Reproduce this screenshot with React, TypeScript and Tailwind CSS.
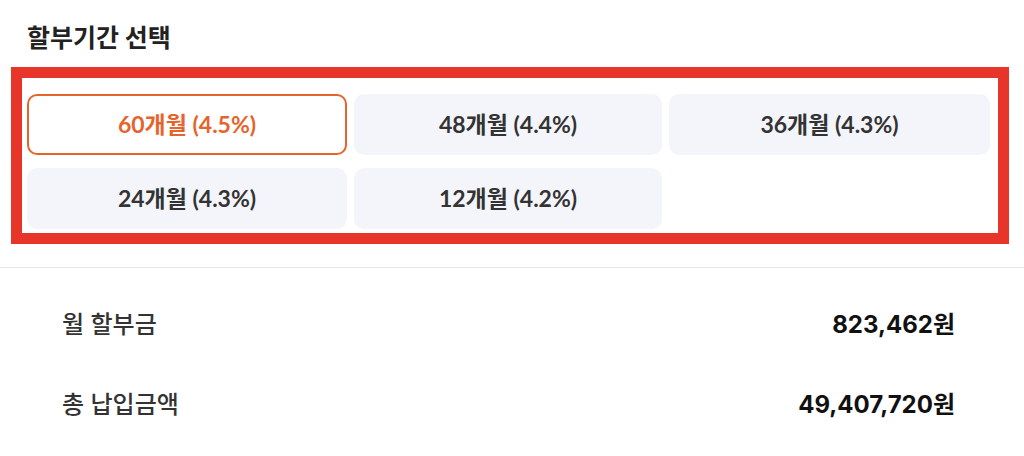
const periods = [
  { months: 60, rate: '4.5%' },
  { months: 48, rate: '4.4%' },
  { months: 36, rate: '4.3%' },
  { months: 24, rate: '4.3%' },
  { months: 12, rate: '4.2%' },
]

const summary = [
  { label: '월 할부금', value: '823,462원' },
  { label: '총 납입금액', value: '49,407,720원' },
]

export default function App() {
  const selected = 60

  return (
    <div className="relative w-[1024px] h-[456px] bg-white overflow-hidden">
      <div className="px-[27px] pt-[20px]">
        <h2
          className="text-[25px] leading-[32px] font-bold text-[#222]"
          style={{ fontFamily: '"Noto Sans CJK KR", sans-serif' }}
        >
          할부기간 선택
        </h2>

        <div
          className="mt-[42px] w-[963px] grid grid-cols-[320px_308px_321px] gap-x-[7px] gap-y-[13px]"
          style={{ fontFamily: 'Lato, "Noto Sans CJK KR", sans-serif' }}
        >
          {periods.map((p) => {
            const active = p.months === selected
            return (
              <button
                key={p.months}
                className={
                  active
                    ? 'h-[61px] rounded-[10px] border-2 border-[#e6642b] bg-white text-[23px] font-bold text-[#e6642b]'
                    : 'h-[61px] rounded-[10px] bg-[#f4f5fa] text-[23px] font-bold text-[#333]'
                }
              >
                {p.months}개월 ({p.rate})
              </button>
            )
          })}
        </div>
      </div>

      <div className="mt-[38px] border-t border-[#e6e7eb]" />

      <div
        className="pt-[17px] pl-[62px] pr-[69px]"
        style={{ fontFamily: 'Inter, "Noto Sans CJK KR", sans-serif' }}
      >
        {summary.map((row) => (
          <div key={row.label} className="h-[80px] flex items-center justify-between">
            <span className="text-[24px] font-medium text-[#333]">{row.label}</span>
            <span className="text-[24px] font-bold text-[#111]">{row.value}</span>
          </div>
        ))}
      </div>

      {/* annotation box drawn over the period grid */}
      <div className="absolute left-[11px] top-[67px] w-[998px] h-[177px] border-[11px] border-[#e8352a] pointer-events-none" />
    </div>
  )
}
